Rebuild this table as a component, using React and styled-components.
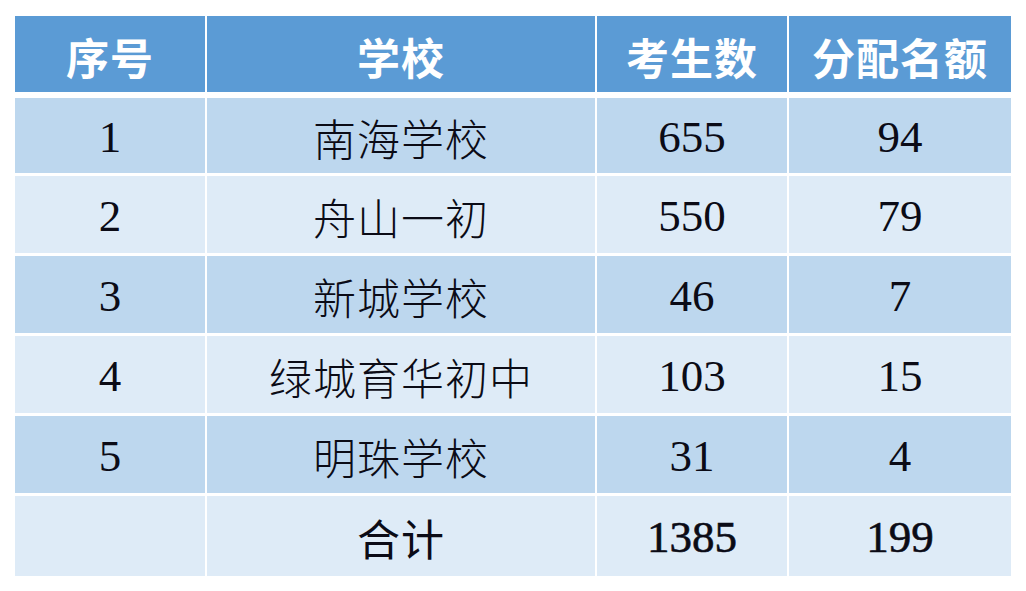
import React from 'react'
import styled, { createGlobalStyle } from 'styled-components'

const GlobalStyle = createGlobalStyle`
  html, body {
    margin: 0;
    padding: 0;
    background: #ffffff;
  }
`

const Page = styled.div`
  padding: 16px 15px;
  background: #ffffff;
`

const Table = styled.div`
  display: grid;
  grid-template-columns: 190px 388px 190px 222px;
  grid-template-rows: 79px 75px 77px 77px 77px 77px 80px;
  column-gap: 2px;
  row-gap: 3px;
  width: 996px;
`

const HeadCell = styled.div`
  height: 76px;
  display: flex;
  align-items: center;
  justify-content: center;
  background: #5b9bd5;
  color: #ffffff;
  font-family: "Noto Sans CJK SC", "Noto Sans", sans-serif;
  font-weight: 700;
  font-size: 43px;
  letter-spacing: 1px;
  padding-top: 4px;
  box-sizing: border-box;
`

const Cell = styled.div`
  display: flex;
  align-items: center;
  justify-content: center;
  background: ${(p) => (p.$odd ? '#bdd7ee' : '#deebf7')};
  color: #0b0b16;
  font-family: ${(p) =>
    p.$num
      ? '"Liberation Serif", "DejaVu Serif", serif'
      : '"Noto Sans CJK SC", "Noto Sans", sans-serif'};
  font-size: ${(p) => (p.$num ? '45px' : '43px')};
  font-weight: ${(p) => (p.$bold && !p.$num ? 400 : 300)};
  -webkit-text-stroke: ${(p) => (p.$bold && p.$num ? '0.6px #0b0b16' : '0')};
  letter-spacing: ${(p) => (p.$num ? '0' : '1px')};
  padding-top: 2px;
  box-sizing: border-box;
`

const headers = ['序号', '学校', '考生数', '分配名额']

const rows = [
  ['1', '南海学校', '655', '94'],
  ['2', '舟山一初', '550', '79'],
  ['3', '新城学校', '46', '7'],
  ['4', '绿城育华初中', '103', '15'],
  ['5', '明珠学校', '31', '4']
]

export default function App() {
  return (
    <Page>
      <GlobalStyle />
      <Table>
        {headers.map((h) => (
          <HeadCell key={h}>{h}</HeadCell>
        ))}
        {rows.map((r, i) => (
          <React.Fragment key={r[0]}>
            <Cell $odd={i % 2 === 0} $num>{r[0]}</Cell>
            <Cell $odd={i % 2 === 0}>{r[1]}</Cell>
            <Cell $odd={i % 2 === 0} $num>{r[2]}</Cell>
            <Cell $odd={i % 2 === 0} $num>{r[3]}</Cell>
          </React.Fragment>
        ))}
        {/* Total row */}
        <Cell />
        <Cell $bold>合计</Cell>
        <Cell $num $bold>1385</Cell>
        <Cell $num $bold>199</Cell>
      </Table>
    </Page>
  )
}
